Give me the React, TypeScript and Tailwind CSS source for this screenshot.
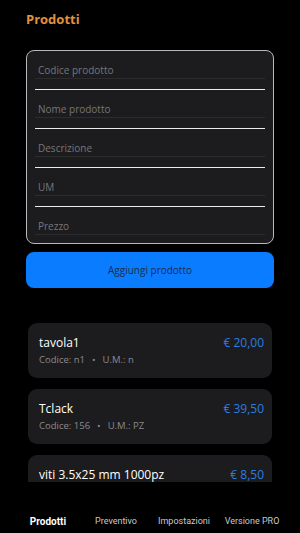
import React from 'react'

const fields = ['Codice prodotto', 'Nome prodotto', 'Descrizione', 'UM', 'Prezzo']

const products = [
  { name: 'tavola1', code: 'n1', um: 'n', price: '€ 20,00' },
  { name: 'Tclack', code: '156', um: 'PZ', price: '€ 39,50' },
  { name: 'viti 3.5x25 mm 1000pz', code: 'v1', um: 'PZ', price: '€ 8,50' },
]

const tabs = ['Prodotti', 'Preventivo', 'Impostazioni', 'Versione PRO']

export default function App() {
  return (
    <div className="flex h-[533px] w-[300px] flex-col overflow-hidden bg-black font-['Open_Sans',sans-serif]">
      {/* header */}
      <div className="px-[26px] pt-[9px]">
        <h1 className="text-[13px] font-bold leading-[20px] text-[#e3913c]">Prodotti</h1>
      </div>

      {/* form */}
      <div className="mx-[26px] mt-[21px] rounded-[8px] border border-[#b9b9bb] bg-[#1c1c1e] px-[8px] pb-[8px] pt-[10px]">
        {fields.map((f, i) => (
          <div key={f}>
            <input
              placeholder={f}
              className="block h-[18px] w-full border-b border-[#2c2c2e] bg-transparent pl-[3px] text-[10px] text-white outline-none placeholder:text-[#76767a]"
            />
            {i < fields.length - 1 && <div className="my-[10px] h-px bg-[#ececec]" />}
          </div>
        ))}
      </div>

      {/* button */}
      <div className="px-[26px] pt-[8px]">
        <button className="flex h-[36px] w-full items-center justify-center rounded-[8px] bg-[#0a7cff] text-[10px] text-[#1b2b4d]">
          Aggiungi prodotto
        </button>
      </div>

      {/* list */}
      <div className="flex min-h-0 flex-1 flex-col gap-[11px] overflow-hidden px-[28px] pt-[35px]">
        {products.map((p) => (
          <div key={p.name} className="flex h-[55px] shrink-0 flex-col justify-center rounded-[9px] bg-[#1c1c1e] pl-[11px] pr-[8px]">
            <div className="flex items-center justify-between">
              <span className="text-[12px] font-medium leading-[18px] text-white">{p.name}</span>
              <span className="text-[12px] leading-[18px] text-[#2b7de0]">{p.price}</span>
            </div>
            <div className="mt-[1px] flex items-center gap-[7px] text-[9.5px] leading-[14px] text-[#8a8a8e]">
              <span>Codice: {p.code}</span>
              <span>•</span>
              <span>U.M.: {p.um}</span>
            </div>
          </div>
        ))}
      </div>

      {/* tab bar */}
      <div className="flex h-[51px] shrink-0 items-start bg-black px-[14px] pt-[32px] font-['Roboto',sans-serif] leading-[15px]">
        {tabs.map((t, i) => (
          <div
            key={t}
            className={
              i === 0
                ? 'flex-1 text-center text-[10px] font-bold text-white'
                : 'flex-1 text-center text-[9px] text-[#c8c8cc]'
            }
          >
            {t}
          </div>
        ))}
      </div>
    </div>
  )
}
